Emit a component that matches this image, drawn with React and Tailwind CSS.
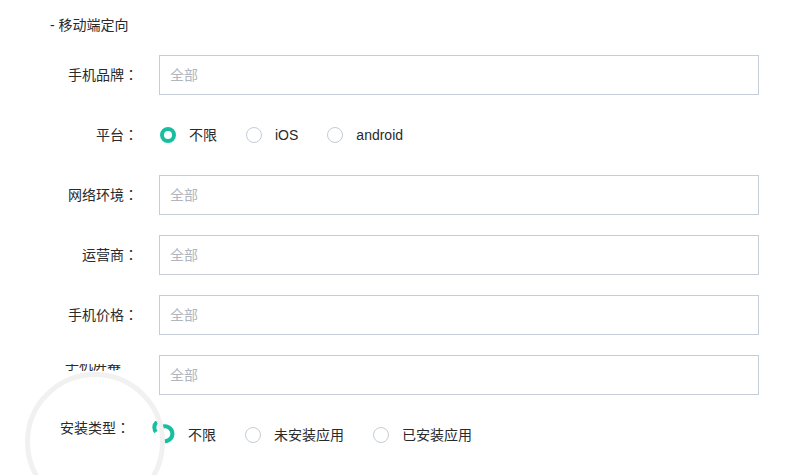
import React from "react";

const font = { fontFamily: '"Liberation Sans", "Noto Sans CJK SC", sans-serif' };
const colonFont = { fontFamily: '"Noto Sans CJK TC", sans-serif' };

function Label({ children }) {
  return (
    <div className="w-[88px] shrink-0 text-right text-[14px] text-[#2a2a2a]">
      {children}
      <span style={colonFont}>：</span>
    </div>
  );
}

function Field({ label }) {
  return (
    <div className="flex items-center h-[40px]">
      <Label>{label}</Label>
      <div className="ml-[21px] w-[600px] h-[40px] border border-[#c4cdd8] bg-white flex items-center px-[10px]">
        <span className="text-[14px] text-[#b0b6bf]">全部</span>
      </div>
    </div>
  );
}

function Radio({ checked, text }) {
  return (
    <div className="flex items-center mr-[29px]">
      {checked ? (
        <span className="w-[16px] h-[16px] rounded-full border-[4px] border-[#17bfa0] bg-white" />
      ) : (
        <span className="w-[16px] h-[16px] rounded-full border border-[#c4cdd8] bg-white" />
      )}
      <span className="ml-[13px] text-[14px] text-[#2a2a2a]">{text}</span>
    </div>
  );
}

function RadioRow({ label, options }) {
  return (
    <div className="flex items-center h-[40px]">
      <Label>{label}</Label>
      <div className="ml-[22px] flex items-center">
        {options.map((o, i) => (
          <Radio key={o} checked={i === 0} text={o} />
        ))}
      </div>
    </div>
  );
}

export default function App() {
  return (
    <div className="relative w-[790px] h-[475px] bg-white overflow-hidden" style={font}>
      <div className="pl-[50px]">
        <div className="h-[50px] flex items-center text-[14px] text-[#2a2a2a]">- 移动端定向</div>
        <div className="mt-[5px] flex flex-col gap-[20px]">
          <Field label="手机品牌" />
          <RadioRow label="平台" options={["不限", "iOS", "android"]} />
          <Field label="网络环境" />
          <Field label="运营商" />
          <Field label="手机价格" />

          {/* screen size row, label half hidden */}
          <div className="flex items-start h-[40px]">
            <div className="w-[88px] shrink-0 flex justify-end pr-[17px] pt-[9px]">
              <div className="h-[8px] overflow-hidden">
                <div className="-mt-[8px] text-[14px] leading-[16px] text-[#2a2a2a]">手机屏幕</div>
              </div>
            </div>
            <div className="ml-[21px] w-[600px] h-[40px] border border-[#c4cdd8] bg-white flex items-center px-[10px]">
              <span className="text-[14px] text-[#b0b6bf]">全部</span>
            </div>
          </div>

          {/* install type row, mid animation */}
          <div className="flex items-center h-[40px]">
            <div className="w-[88px] shrink-0 text-right pr-[8px] pb-[14px] text-[14px] text-[#2a2a2a]">
              安装类型<span style={colonFont}>：</span>
            </div>
            <div className="ml-[12px] flex items-center">
              <svg width="28" height="28" viewBox="0 0 28 28">
                <path d="M7 1 A7 7 0 0 0 6 11" fill="none" stroke="#17bfa0" strokeWidth="4" />
                <path d="M13 5.5 A7.5 7.5 0 1 1 13 20" fill="none" stroke="#17bfa0" strokeWidth="4" />
              </svg>
              <span className="ml-[10px] mr-[29px] text-[14px] text-[#2a2a2a]">不限</span>
              <Radio text="未安装应用" />
              <Radio text="已安装应用" />
            </div>
          </div>
        </div>
      </div>

      {/* ripple ring overlay */}
      <div className="absolute left-[25px] top-[372px] w-[140px] h-[140px] rounded-full border-[5px] border-[#f1f1f1] pointer-events-none" />
    </div>
  );
}
